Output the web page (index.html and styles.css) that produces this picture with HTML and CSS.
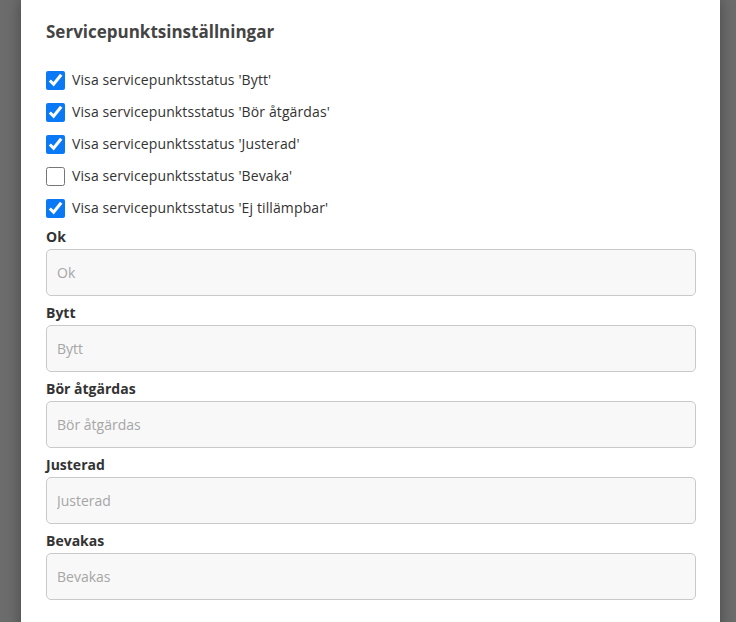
FILE: index.html
```html
<!DOCTYPE html>
<html lang="sv">
<head>
<meta charset="utf-8">
<link rel="stylesheet" href="styles.css">
</head>
<body>
<div class="overlay">
  <div class="modal">
    <h2 class="title">Servicepunktsinställningar</h2>
    <div class="checks">
      <label class="check"><input type="checkbox" checked><span>Visa servicepunktsstatus 'Bytt'</span></label>
      <label class="check"><input type="checkbox" checked><span>Visa servicepunktsstatus 'Bör åtgärdas'</span></label>
      <label class="check"><input type="checkbox" checked><span>Visa servicepunktsstatus 'Justerad'</span></label>
      <label class="check"><input type="checkbox"><span>Visa servicepunktsstatus 'Bevaka'</span></label>
      <label class="check"><input type="checkbox" checked><span>Visa servicepunktsstatus 'Ej tillämpbar'</span></label>
    </div>
    <div class="fields">
      <div class="field"><label class="flabel">Ok</label><input class="finput" type="text" placeholder="Ok"></div>
      <div class="field"><label class="flabel">Bytt</label><input class="finput" type="text" placeholder="Bytt"></div>
      <div class="field"><label class="flabel">Bör åtgärdas</label><input class="finput" type="text" placeholder="Bör åtgärdas"></div>
      <div class="field"><label class="flabel">Justerad</label><input class="finput" type="text" placeholder="Justerad"></div>
      <div class="field"><label class="flabel">Bevakas</label><input class="finput" type="text" placeholder="Bevakas"></div>
    </div>
  </div>
</div>
</body>
</html>
```

FILE: styles.css
```css
html, body {
  margin: 0;
  padding: 0;
  height: 100%;
  overflow: hidden;
}
body {
  background: #6c6c6c;
  font-family: "Open Sans", "Liberation Sans", sans-serif;
  color: #333;
}
.overlay {
  display: flex;
  justify-content: flex-start;
  padding-left: 21px;
}
.modal {
  width: 699px;
  box-sizing: border-box;
  background: #fff;
  padding: 20px 24px 40px 25px;
  min-height: 622px;
  box-shadow: 0 0 14px rgba(0, 0, 0, 0.35);
}
.title {
  margin: 0 0 26px;
  font-size: 17px;
  line-height: 24px;
  font-weight: 700;
  color: #444;
}
.checks {
  display: flex;
  flex-direction: column;
  gap: 12px;
}
.check {
  display: flex;
  align-items: center;
  gap: 7px;
  font-size: 14px;
  line-height: 20px;
  letter-spacing: 0.12px;
  color: #333;
  height: 20px;
}
.check input {
  width: 19px;
  height: 19px;
  margin: 0;
  accent-color: #0b78f5;
}
.fields {
  display: flex;
  flex-direction: column;
  gap: 7px;
  margin-top: 9px;
}
.field {
  display: flex;
  flex-direction: column;
}
.flabel {
  font-size: 14px;
  line-height: 20px;
  font-weight: 700;
  color: #333;
  margin-bottom: 2px;
}
.finput {
  height: 47px;
  box-sizing: border-box;
  border: 1px solid #c9c9c9;
  border-radius: 5px;
  background: #f8f8f8;
  padding: 0 10px;
  font-family: "Open Sans", "Liberation Sans", sans-serif;
  font-size: 14px;
  color: #333;
  outline: none;
}
.finput::placeholder {
  color: #a6a6a6;
}
```
